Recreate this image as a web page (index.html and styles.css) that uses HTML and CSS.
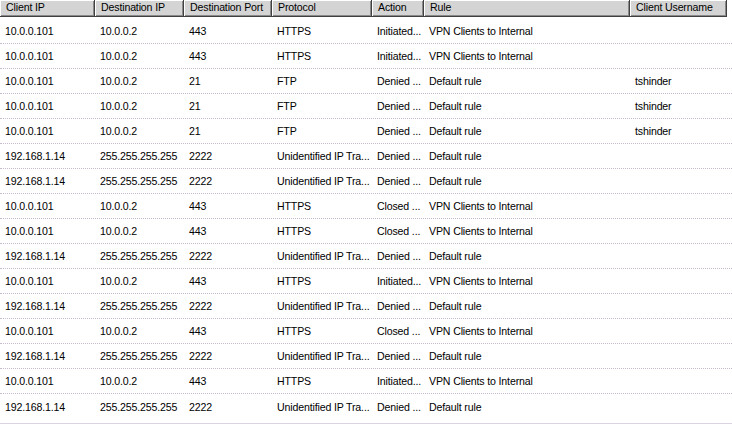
FILE: index.html
```html
<!DOCTYPE html>
<html>
<head>
<meta charset="utf-8">
<link rel="stylesheet" href="styles.css">
</head>
<body>
<div class="list">
  <div class="head">
    <div class="hc">Client IP</div>
    <div class="hc">Destination IP</div>
    <div class="hc">Destination Port</div>
    <div class="hc">Protocol</div>
    <div class="hc">Action</div>
    <div class="hc">Rule</div>
    <div class="hc hc-last">Client Username</div>
  </div>
  <div class="rows">
    <div class="row"><span>10.0.0.101</span><span>10.0.0.2</span><span>443</span><span>HTTPS</span><span>Initiated...</span><span>VPN Clients to Internal</span><span></span></div>
    <div class="row"><span>10.0.0.101</span><span>10.0.0.2</span><span>443</span><span>HTTPS</span><span>Initiated...</span><span>VPN Clients to Internal</span><span></span></div>
    <div class="row"><span>10.0.0.101</span><span>10.0.0.2</span><span>21</span><span>FTP</span><span>Denied ...</span><span>Default rule</span><span>tshinder</span></div>
    <div class="row"><span>10.0.0.101</span><span>10.0.0.2</span><span>21</span><span>FTP</span><span>Denied ...</span><span>Default rule</span><span>tshinder</span></div>
    <div class="row"><span>10.0.0.101</span><span>10.0.0.2</span><span>21</span><span>FTP</span><span>Denied ...</span><span>Default rule</span><span>tshinder</span></div>
    <div class="row"><span>192.168.1.14</span><span>255.255.255.255</span><span>2222</span><span>Unidentified IP Tra...</span><span>Denied ...</span><span>Default rule</span><span></span></div>
    <div class="row"><span>192.168.1.14</span><span>255.255.255.255</span><span>2222</span><span>Unidentified IP Tra...</span><span>Denied ...</span><span>Default rule</span><span></span></div>
    <div class="row"><span>10.0.0.101</span><span>10.0.0.2</span><span>443</span><span>HTTPS</span><span>Closed ...</span><span>VPN Clients to Internal</span><span></span></div>
    <div class="row"><span>10.0.0.101</span><span>10.0.0.2</span><span>443</span><span>HTTPS</span><span>Closed ...</span><span>VPN Clients to Internal</span><span></span></div>
    <div class="row"><span>192.168.1.14</span><span>255.255.255.255</span><span>2222</span><span>Unidentified IP Tra...</span><span>Denied ...</span><span>Default rule</span><span></span></div>
    <div class="row"><span>10.0.0.101</span><span>10.0.0.2</span><span>443</span><span>HTTPS</span><span>Initiated...</span><span>VPN Clients to Internal</span><span></span></div>
    <div class="row"><span>192.168.1.14</span><span>255.255.255.255</span><span>2222</span><span>Unidentified IP Tra...</span><span>Denied ...</span><span>Default rule</span><span></span></div>
    <div class="row"><span>10.0.0.101</span><span>10.0.0.2</span><span>443</span><span>HTTPS</span><span>Closed ...</span><span>VPN Clients to Internal</span><span></span></div>
    <div class="row"><span>192.168.1.14</span><span>255.255.255.255</span><span>2222</span><span>Unidentified IP Tra...</span><span>Denied ...</span><span>Default rule</span><span></span></div>
    <div class="row"><span>10.0.0.101</span><span>10.0.0.2</span><span>443</span><span>HTTPS</span><span>Initiated...</span><span>VPN Clients to Internal</span><span></span></div>
    <div class="row row-last"><span>192.168.1.14</span><span>255.255.255.255</span><span>2222</span><span>Unidentified IP Tra...</span><span>Denied ...</span><span>Default rule</span><span></span></div>
  </div>
  <div class="edge"></div>
</div>
</body>
</html>
```

FILE: styles.css
```css
html, body {
  margin: 0;
  padding: 0;
  background: #ffffff;
}
body {
  font-family: "Liberation Sans", Arial, sans-serif;
  font-size: 10.6px;
  letter-spacing: -0.15px;
  color: #000000;
  width: 732px;
  height: 425px;
  overflow: hidden;
}
.list {
  display: flex;
  flex-direction: column;
}
.head,
.row {
  display: grid;
  grid-template-columns: 95px 89px 88px 100px 52px 206px 97px;
  width: 727px;
}
.head {
  height: 17px;
}
.hc {
  background: #d4d4d4;
  border-right: 1px solid #404040;
  border-bottom: 1px solid #404040;
  box-shadow: inset 1px 1px 0 #ffffff, inset -1px -1px 0 #8a8a8a;
  padding-left: 6px;
  line-height: 15px;
  white-space: nowrap;
  overflow: hidden;
}
.rows {
  padding-top: 2px;
  width: 732px;
}
.row {
  width: 732px;
  grid-template-columns: 95px 89px 88px 100px 52px 206px 102px;
  height: 25px;
  box-sizing: border-box;
  border-bottom: 1px dotted #c6bace;
  align-items: center;
}
.row span {
  padding-left: 5px;
  white-space: nowrap;
  overflow: hidden;
  line-height: 24px;
}
.row-last {
  border-bottom: none;
}
.edge {
  margin-top: 4px;
  height: 1px;
  width: 732px;
  background: #dcd3e2;
}
```
